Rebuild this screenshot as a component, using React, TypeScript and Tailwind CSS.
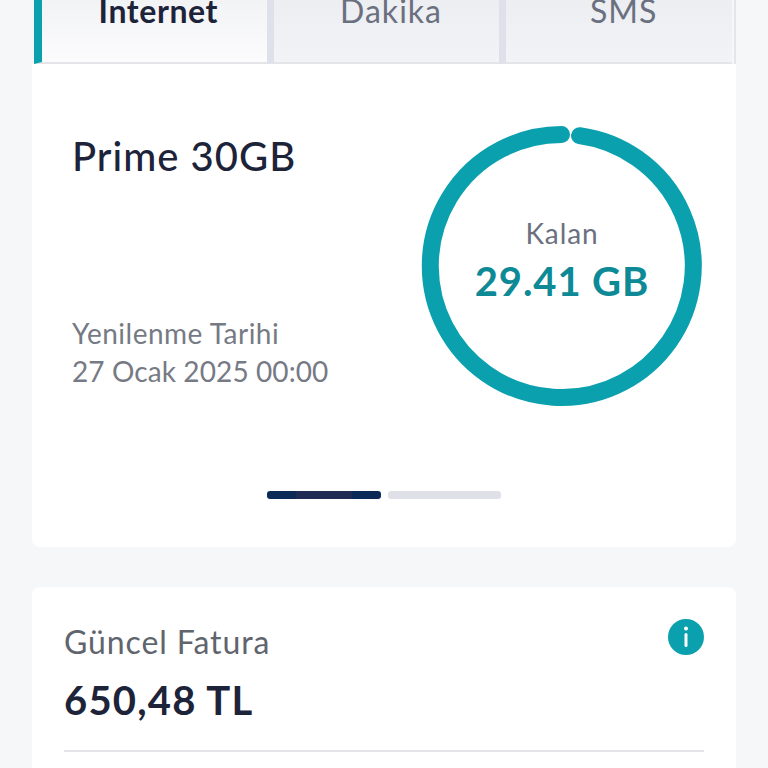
const font = { fontFamily: '"Lato", "Noto Sans", sans-serif' };

function Tab({ label, active }: { label: string; active?: boolean }) {
  return (
    <div
      className={
        active
          ? "flex flex-1 items-end justify-center h-[64px] pb-[35px] pl-[8px] bg-gradient-to-b from-[#f2f3f5] to-[#fcfcfd] border-l-[8px] border-l-[#0ba0ad] border-b-2 border-b-[#e3e5e9]"
          : "flex flex-1 items-end justify-center h-[64px] pb-[35px] pl-[9px] bg-gradient-to-b from-[#eceef1] to-[#f2f3f6] border-l-[7px] border-l-[#dfe1ea] border-b-2 border-b-[#e3e5e9]"
      }
    >
      <span
        className={
          active
            ? "text-[32px] leading-none font-bold tracking-[0.6px] text-[#1d2339]"
            : "text-[32px] leading-none tracking-[1px] text-[#6b7080]"
        }
      >
        {label}
      </span>
    </div>
  );
}

function UsageRing() {
  return (
    <svg width="282" height="282" viewBox="0 0 282 282" className="shrink-0">
      <path
        d="M 158.5 10.7 A 131.5 131.5 0 1 1 140.5 9.5"
        fill="none"
        stroke="#0ba0ad"
        strokeWidth="17"
        strokeLinecap="round"
      />
    </svg>
  );
}

export default function App() {
  return (
    <div className="h-[768px] overflow-hidden bg-[#f6f7f9] px-[32px]" style={font}>
      <div className="flex pr-[2px] pl-[2px] border-r-[2px] border-r-[#e3e5e9]">
        <Tab label="Internet" active />
        <Tab label="Dakika" />
        <Tab label="SMS" />
      </div>

      <div className="bg-white rounded-b-lg h-[483px] flex flex-col">
        <div className="flex justify-between pl-[40px] pr-[33px] pt-[61px]">
          <div className="flex flex-col">
            <h2 className="text-[40px] leading-[56px] mt-[3px] font-medium tracking-[1px] text-[#1d2339]">Prime 30GB</h2>
            <div className="mt-[130px] text-[28px] leading-[38px] text-[#767a85]">
              <p className="tracking-[0.5px]">Yenilenme Tarihi</p>
              <p className="tracking-[0.1px]">27 Ocak 2025 00:00</p>
            </div>
          </div>
          <div className="relative">
            <UsageRing />
            <div className="absolute inset-0 flex flex-col items-center pt-[89px]">
              <span className="text-[28px] leading-[38px] tracking-[0.9px] text-[#6b7080]">Kalan</span>
              <span className="text-[40px] leading-[59px] font-bold tracking-[0.9px] text-[#0d8a96]">29.41 GB</span>
            </div>
          </div>
        </div>
        <div className="flex justify-center gap-[7px] mt-[84px]">
          <div className="flex justify-center h-2 w-[114px] rounded-[3px] bg-[#0b2a57]">
            <div className="h-2 w-[56px] bg-[#1f2a55]" />
          </div>
          <div className="h-2 w-[113px] rounded-[3px] bg-[#e0e1e8]" />
        </div>
      </div>

      <div className="mt-[40px] bg-white rounded-t-lg h-[300px] pl-[32px] pr-[32px] pt-[32px]">
        <div className="flex justify-between">
          <div>
            <p className="text-[32px] leading-[46px] tracking-[0.9px] text-[#5f646d]">Güncel Fatura</p>
            <p className="mt-[10px] text-[40px] leading-[50px] font-bold tracking-[1.2px] text-[#1d2339]">650,48 TL</p>
          </div>
          <svg width="36" height="36" viewBox="0 0 36 36" className="shrink-0">
            <circle cx="18" cy="18" r="18" fill="#0ba0ad" />
            <circle cx="18" cy="9.5" r="2" fill="#fff" />
            <rect x="16.5" y="14" width="3" height="14" rx="1.5" fill="#fff" />
          </svg>
        </div>
        <div className="mt-[25px] h-[2px] w-[640px] bg-[#e3e5e9]" />
      </div>
    </div>
  );
}
